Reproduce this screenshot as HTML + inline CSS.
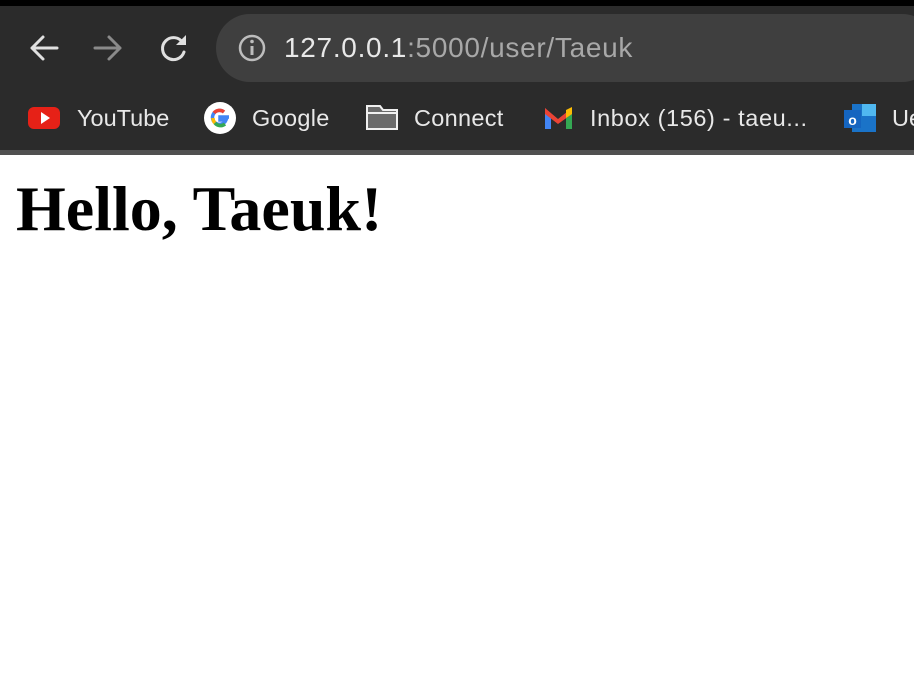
<!DOCTYPE html>
<html><head><meta charset="utf-8"><style>
*{margin:0;padding:0;box-sizing:border-box}
body{width:914px;height:692px;overflow:hidden;background:#fff;font-family:"Liberation Sans",sans-serif;position:relative}
.top{position:absolute;left:0;top:0;width:914px;height:6px;background:#000}
.bar{position:absolute;left:0;top:6px;width:914px;height:144px;background:#2b2b2b}
.sep{position:absolute;left:0;top:150px;width:914px;height:5px;background:#505050}
.url{position:absolute;left:216px;top:14px;width:720px;height:68px;border-radius:34px;background:#3f3f3f}
.t{position:absolute;color:#e8e8e8;white-space:nowrap;font-size:23.5px;top:105px}
h1{position:absolute;left:16px;top:177px;font:bold 64px/1 "Liberation Serif",serif;color:#000}
</style></head><body>
<div class="top"></div><div class="bar"></div><div class="sep"></div>
<div class="url"></div>
<svg style="position:absolute;left:0;top:0" width="914" height="150">
<g fill="none" stroke-width="3" stroke-linecap="round" stroke-linejoin="round">
<path d="M57 48H32M43 37L32 48L43 59" stroke="#e0e0e0"/>
<path d="M95 48H120M109 37L120 48L109 59" stroke="#8a8a8a"/>
<path d="M183 43A11 11 0 1 0 184 52" stroke="#e0e0e0"/>
<circle cx="252" cy="48" r="12" stroke="#bdbdbd" stroke-width="2.5"/>
</g>
<path d="M186 35V45H176Z" fill="#e0e0e0"/>
<rect x="250.5" y="46" width="3" height="9" fill="#bdbdbd"/><circle cx="252" cy="41.5" r="1.8" fill="#bdbdbd"/>
<rect x="28" y="107" width="32" height="22" rx="6" fill="#e62117"/>
<path d="M41 112V124L50 118Z" fill="#fff"/>
<circle cx="220" cy="118" r="16" fill="#fff"/>
<path d="M229 117H220V120H226A7 7 0 1 1 224 112" fill="none" stroke="#4285f4" stroke-width="3.5"/>
<path d="M214 113A7 7 0 0 1 224 112" fill="none" stroke="#ea4335" stroke-width="3.5"/>
<path d="M213 118A7 7 0 0 0 215 123" fill="none" stroke="#fbbc05" stroke-width="3.5"/>
<path d="M215 123A7 7 0 0 0 225 124" fill="none" stroke="#34a853" stroke-width="3.5"/>
<path d="M367 106H380L383 110H397V129H367Z" fill="#6a6a6a" stroke="#f0f0f0" stroke-width="2"/>
<path d="M367 113H397" stroke="#f0f0f0" stroke-width="2"/>
<path d="M545 108V129H551V116Z" fill="#4285f4"/><path d="M572 108V129H566V116Z" fill="#34a853"/>
<path d="M545 108L558 119L572 108V114L558 124L545 114Z" fill="#ea4335"/>
<path d="M566 110L572 107V114L566 118Z" fill="#fbbc05"/>
<rect x="852" y="104" width="24" height="28" fill="#1a73c8"/><rect x="862" y="104" width="14" height="12" fill="#50b8f0"/>
<rect x="844" y="110" width="17" height="18" fill="#1565c0"/>
<text x="852.5" y="125" font-family="Liberation Sans" font-size="14" font-weight="bold" fill="#fff" text-anchor="middle">o</text>
</svg>
<div class="t" style="left:284px;top:32px;font-size:28px;letter-spacing:0.7px">127.0.0.1<span style="color:#a8a8a8">:5000/user/Taeuk</span></div>
<div class="t" style="left:77px">YouTube</div>
<div class="t" style="left:252px;letter-spacing:0.3px">Google</div>
<div class="t" style="left:414px;letter-spacing:0.3px">Connect</div>
<div class="t" style="left:590px;letter-spacing:0.6px">Inbox (156) - taeu...</div>
<div class="t" style="left:892px">Ue</div>
<h1>Hello, Taeuk!</h1>
</body></html>
